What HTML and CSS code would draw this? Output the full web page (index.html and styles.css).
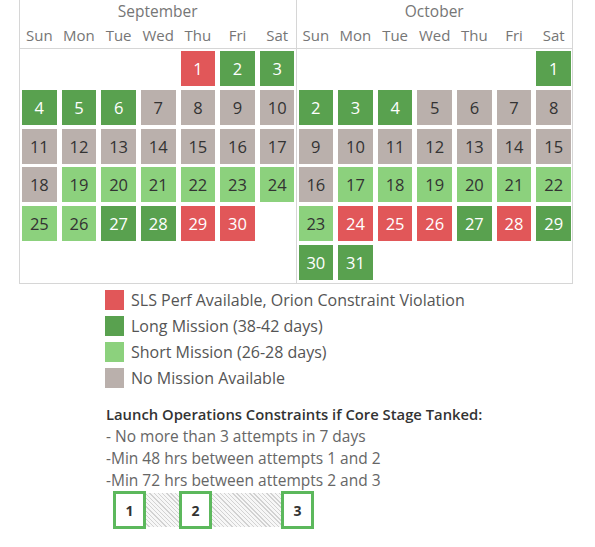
FILE: index.html
```html
<!DOCTYPE html>
<html>
<head>
<meta charset="utf-8">
<link rel="stylesheet" href="styles.css">
</head>
<body>
<div class="cal">
  <div class="month">
    <div class="head">
      <div class="mname">September</div>
      <div class="grid days"><span>Sun</span><span>Mon</span><span>Tue</span><span>Wed</span><span>Thu</span><span>Fri</span><span>Sat</span></div>
    </div>
    <div class="grid body">
      <i></i><i></i><i></i><i></i>
      <b class="r">1</b><b class="d">2</b><b class="d">3</b>
      <b class="d">4</b><b class="d">5</b><b class="d">6</b><b class="g">7</b><b class="g">8</b><b class="g">9</b><b class="g">10</b>
      <b class="g">11</b><b class="g">12</b><b class="g">13</b><b class="g">14</b><b class="g">15</b><b class="g">16</b><b class="g">17</b>
      <b class="g">18</b><b class="l">19</b><b class="l">20</b><b class="l">21</b><b class="l">22</b><b class="l">23</b><b class="l">24</b>
      <b class="l">25</b><b class="l">26</b><b class="d">27</b><b class="d">28</b><b class="r">29</b><b class="r">30</b>
    </div>
  </div>
  <div class="month">
    <div class="head">
      <div class="mname">October</div>
      <div class="grid days"><span>Sun</span><span>Mon</span><span>Tue</span><span>Wed</span><span>Thu</span><span>Fri</span><span>Sat</span></div>
    </div>
    <div class="grid body">
      <i></i><i></i><i></i><i></i><i></i><i></i>
      <b class="d">1</b>
      <b class="d">2</b><b class="d">3</b><b class="d">4</b><b class="g">5</b><b class="g">6</b><b class="g">7</b><b class="g">8</b>
      <b class="g">9</b><b class="g">10</b><b class="g">11</b><b class="g">12</b><b class="g">13</b><b class="g">14</b><b class="g">15</b>
      <b class="g">16</b><b class="l">17</b><b class="l">18</b><b class="l">19</b><b class="l">20</b><b class="l">21</b><b class="l">22</b>
      <b class="l">23</b><b class="r">24</b><b class="r">25</b><b class="r">26</b><b class="d">27</b><b class="r">28</b><b class="d">29</b>
      <b class="d">30</b><b class="d">31</b>
    </div>
  </div>
</div>

<ul class="legend">
  <li><span class="sw r"></span>SLS Perf Available, Orion Constraint Violation</li>
  <li><span class="sw d"></span>Long Mission (38-42 days)</li>
  <li><span class="sw l"></span>Short Mission (26-28 days)</li>
  <li><span class="sw g"></span>No Mission Available</li>
</ul>

<div class="notes">
  <div class="title">Launch Operations Constraints if Core Stage Tanked:</div>
  <div class="line">- No more than 3 attempts in 7 days</div>
  <div class="line">-Min 48 hrs between attempts 1 and 2</div>
  <div class="line">-Min 72 hrs between attempts 2 and 3</div>
  <div class="attempts">
    <div class="box">1</div>
    <div class="hatch h1"></div>
    <div class="box">2</div>
    <div class="hatch h2"></div>
    <div class="box">3</div>
  </div>
</div>
</body>
</html>
```

FILE: styles.css
```css
body {
  margin: 0;
  background: #fff;
  font-family: "Open Sans", "Noto Sans", sans-serif;
}
.cal {
  display: flex;
  margin-left: 19px;
  width: 553px;
  border-left: 1px solid #d6d6d6;
}
.month {
  width: 276px;
  border-right: 1px solid #d6d6d6;
}
.head {
  height: 48px;
  border-bottom: 1px solid #d6d6d6;
}
.mname {
  text-align: center;
  font-size: 15.5px;
  color: #767676;
  height: 22px;
  line-height: 22px;
}
.grid {
  display: grid;
  grid-template-columns: repeat(7, 1fr);
  column-gap: 5px;
  padding: 0 1px 0 2px;
}
.days span {
  text-align: center;
  font-size: 15px;
  color: #767676;
  line-height: 26px;
}
.body {
  grid-auto-rows: 35px;
  row-gap: 3.8px;
  padding-top: 2px;
  height: 229px;
  padding-bottom: 3px;
  border-bottom: 1px solid #d6d6d6;
}
.body b {
  font-weight: normal;
  display: flex;
  align-items: center;
  justify-content: center;
  font-size: 16.5px;
  color: #333;
}
.r { background: #e15759; }
.d { background: #59a14f; }
.l { background: #8cd17d; }
.g { background: #bab0ac; }
.body b.r, .body b.d { color: #fff; }

.legend {
  list-style: none;
  margin: 3px 0 0 105px;
  padding: 0;
}
.legend li {
  display: flex;
  align-items: center;
  height: 26px;
  font-size: 16px;
  color: #555;
}
.sw {
  width: 19px;
  height: 20px;
  margin-right: 7px;
}
.notes {
  margin: 12px 0 0 106px;
}
.title {
  font-weight: 600;
  font-size: 14.8px;
  color: #333;
  line-height: 22px;
}
.line {
  font-size: 15.5px;
  color: #666;
  line-height: 22px;
}
.attempts {
  display: flex;
  align-items: center;
  margin: 0 0 0 7px;
}
.box {
  width: 27px;
  height: 32px;
  border: 3px solid #5cb85c;
  display: flex;
  align-items: center;
  justify-content: center;
  font-weight: bold;
  font-size: 14px;
  color: #333;
  background: #fff;
}
.hatch {
  height: 34px;
  background: repeating-linear-gradient(45deg, #f7f7f7 0 2px, #d2d2d2 2px 3px);
}
.h1 { width: 33px; }
.h2 { width: 69px; }
```
